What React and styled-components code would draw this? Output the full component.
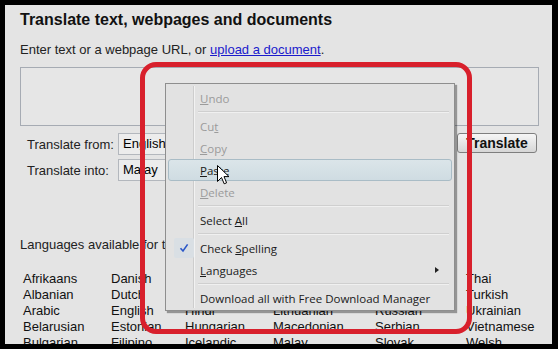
import React from "react";
import styled, { createGlobalStyle } from "styled-components";

const GlobalStyle = createGlobalStyle`
	html, body { margin: 0; padding: 0; background: #000; }
	body { font-family: "Liberation Sans", Arial, sans-serif; }
`;

const columns = [
	["Afrikaans", "Albanian", "Arabic", "Belarusian", "Bulgarian", "Catalan", "Chinese", "Croatian", "Czech"],
	["Danish", "Dutch", "English", "Estonian", "Filipino", "Finnish", "French", "Galician", "German"],
	["Greek", "Hebrew", "Hindi", "Hungarian", "Icelandic", "Indonesian", "Irish", "Italian", "Japanese"],
	["Korean", "Latvian", "Lithuanian", "Macedonian", "Malay", "Maltese", "Norwegian", "Persian", "Polish"],
	["Portuguese", "Romanian", "Russian", "Serbian", "Slovak", "Slovenian", "Spanish", "Swahili", "Swedish"],
	["Thai", "Turkish", "Ukrainian", "Vietnamese", "Welsh", "Yiddish"],
];

const menu = [
	{ label: <><u>U</u>ndo</>, disabled: true },
	{ sep: true },
	{ label: <>Cu<u>t</u></>, disabled: true },
	{ label: <><u>C</u>opy</>, disabled: true },
	{ label: <><u>P</u>aste</>, hover: true },
	{ label: <><u>D</u>elete</>, disabled: true },
	{ sep: true },
	{ label: <>Select <u>A</u>ll</> },
	{ sep: true },
	{ label: <>Check <u>S</u>pelling</>, checked: true },
	{ label: <><u>L</u>anguages</>, sub: true },
	{ sep: true },
	{ label: <>Download all with Free Download Manager</> },
];

const App = () => {
	return (
		<Frame>
			<GlobalStyle />
			<Page>
				<Title>Translate text, webpages and documents</Title>
				<Intro>
					Enter text or a webpage URL, or <a href="#">upload a document</a>.
				</Intro>
				<TextBox />
				<FormRow>
					<Fields>
						<Field>
							<Label>Translate from:</Label>
							<Select>English</Select>
						</Field>
						<Field>
							<Label>Translate into:</Label>
							<Select>Malay</Select>
						</Field>
					</Fields>
					<Button>Translate</Button>
				</FormRow>
				<Available>Languages available for translation:</Available>
				<LangGrid>
					{columns.map((col, i) => (
						<LangCol key={i}>
							{col.map((l) => <span key={l}>{l}</span>)}
						</LangCol>
					))}
				</LangGrid>
			</Page>

			<Menu>
				{menu.map((m, i) =>
					m.sep ? (
						<Sep key={i} />
					) : (
						<Item key={i} $disabled={m.disabled} $hover={m.hover}>
							<Gutter>
								{m.checked && (
									<CheckBox>
										<svg width="10" height="10" viewBox="0 0 10 10">
											<path d="M1.5 5.2 L4 8 L8.6 1.4" fill="none" stroke="#2a56c8" strokeWidth="1.6" />
										</svg>
									</CheckBox>
								)}
							</Gutter>
							<ItemText>{m.label}</ItemText>
							{m.sub && <Arrow />}
						</Item>
					)
				)}
			</Menu>

			<Cursor width="13" height="21" viewBox="0 0 13 21">
				<path d="M0.5 0.5 L0.5 16.5 L4.5 12.5 L7.2 18.8 L9.6 17.8 L7 11.6 L12 11.6 Z" fill="#fff" stroke="#000" strokeWidth="1" />
			</Cursor>

			<Highlight />
		</Frame>
	);
};

const Frame = styled.div`
	position: relative;
	width: 558px;
	height: 349px;
	box-sizing: border-box;
	padding: 5px 6px 5px 5px;
	background: #000;
	overflow: hidden;
`;

const Page = styled.div`
	height: 100%;
	background: #e4e4e4;
	padding: 0 0 0 15px;
	box-sizing: border-box;
	overflow: hidden;
	color: #000;
	font-size: 13px;
`;

const Title = styled.h1`
	margin: 0;
	padding-top: 5px;
	font-size: 16px;
	line-height: 20px;
	font-weight: bold;
	color: #111;
`;

const Intro = styled.p`
	margin: 12px 0 0;
	line-height: 16px;
	color: #222;

	a {
		color: #1a1acc;
	}
`;

const TextBox = styled.div`
	margin-top: 9px;
	width: 519px;
	height: 59px;
	box-sizing: border-box;
	border: 1px solid #a6abb3;
	background: #e6e6e6;
`;

const FormRow = styled.div`
	display: flex;
	justify-content: space-between;
	width: 517px;
	margin-top: 7px;
`;

const Fields = styled.div`
	display: flex;
	flex-direction: column;
	gap: 4px;
`;

const Field = styled.div`
	display: flex;
	align-items: center;
	height: 22px;
`;

const Label = styled.span`
	width: 91px;
	padding-left: 7px;
	color: #222;
`;

const Select = styled.div`
	width: 160px;
	height: 22px;
	box-sizing: border-box;
	border: 1px solid #b3b7bd;
	background: #ececec;
	padding: 2px 4px;
	line-height: 16px;
`;

const Button = styled.button`
	width: 80px;
	height: 20px;
	padding: 0;
	border: 1px solid #7e7e7e;
	border-radius: 3px;
	background: linear-gradient(#f6f6f6, #d6d6d6);
	font-family: "Liberation Sans", Arial, sans-serif;
	font-size: 14px;
	font-weight: bold;
	color: #111;
`;

const Available = styled.p`
	margin: 56px 0 0;
	line-height: 16px;
	color: #222;
`;

const LangGrid = styled.div`
	display: grid;
	grid-template-columns: 88px 74px 88px 102px 91px auto;
	margin-top: 18px;
	padding-left: 3px;
`;

const LangCol = styled.div`
	display: flex;
	flex-direction: column;
	line-height: 16px;
	color: #111;
	white-space: nowrap;
`;

const Menu = styled.div`
	position: absolute;
	left: 165px;
	top: 83px;
	width: 290px;
	box-sizing: border-box;
	padding: 3px 2px 1px;
	border: 1px solid #8e8e8e;
	background: #e2e2e2;
	box-shadow: 2px 2px 1px rgba(0, 0, 0, 0.35);
	font-family: "Open Sans", "Noto Sans", sans-serif;
	font-size: 11.5px;

	&::before {
		content: "";
		position: absolute;
		left: 27px;
		top: 2px;
		bottom: 2px;
		width: 1px;
		background: #cdcdcd;
		box-shadow: 1px 0 0 #f2f2f2;
	}
`;

const Item = styled.div`
	position: relative;
	display: flex;
	align-items: center;
	height: 22px;
	box-sizing: border-box;
	border: 1px solid ${(p) => (p.$hover ? "#a9bcc6" : "transparent")};
	border-radius: 3px;
	background: ${(p) => (p.$hover ? "linear-gradient(#dbe5e9, #cfdce2)" : "transparent")};
	color: ${(p) => (p.$disabled ? "#9b9b9b" : "#1a1a1a")};
	z-index: 1;
`;

const Gutter = styled.div`
	width: 30px;
	display: flex;
	justify-content: center;
`;

const CheckBox = styled.div`
	width: 20px;
	height: 20px;
	display: flex;
	align-items: center;
	justify-content: center;
	background: #d9dfe4;
	border-radius: 2px;
`;

const ItemText = styled.span`
	padding-left: 1px;
	white-space: nowrap;
`;

const Arrow = styled.span`
	position: absolute;
	right: 12px;
	top: 7px;
	border-left: 4px solid #222;
	border-top: 3.5px solid transparent;
	border-bottom: 3.5px solid transparent;
`;

const Sep = styled.div`
	height: 1px;
	margin: 2px 3px 2px 30px;
	background: #cfcfcf;
	border-bottom: 1px solid #f0f0f0;
`;

const Cursor = styled.svg`
	position: absolute;
	left: 217px;
	top: 165px;
	z-index: 3;
`;

const Highlight = styled.div`
	position: absolute;
	left: 140px;
	top: 62px;
	width: 332px;
	height: 272px;
	box-sizing: border-box;
	border: 5px solid #d8202c;
	border-radius: 16px;
	pointer-events: none;
	z-index: 2;
`;

export default App;
